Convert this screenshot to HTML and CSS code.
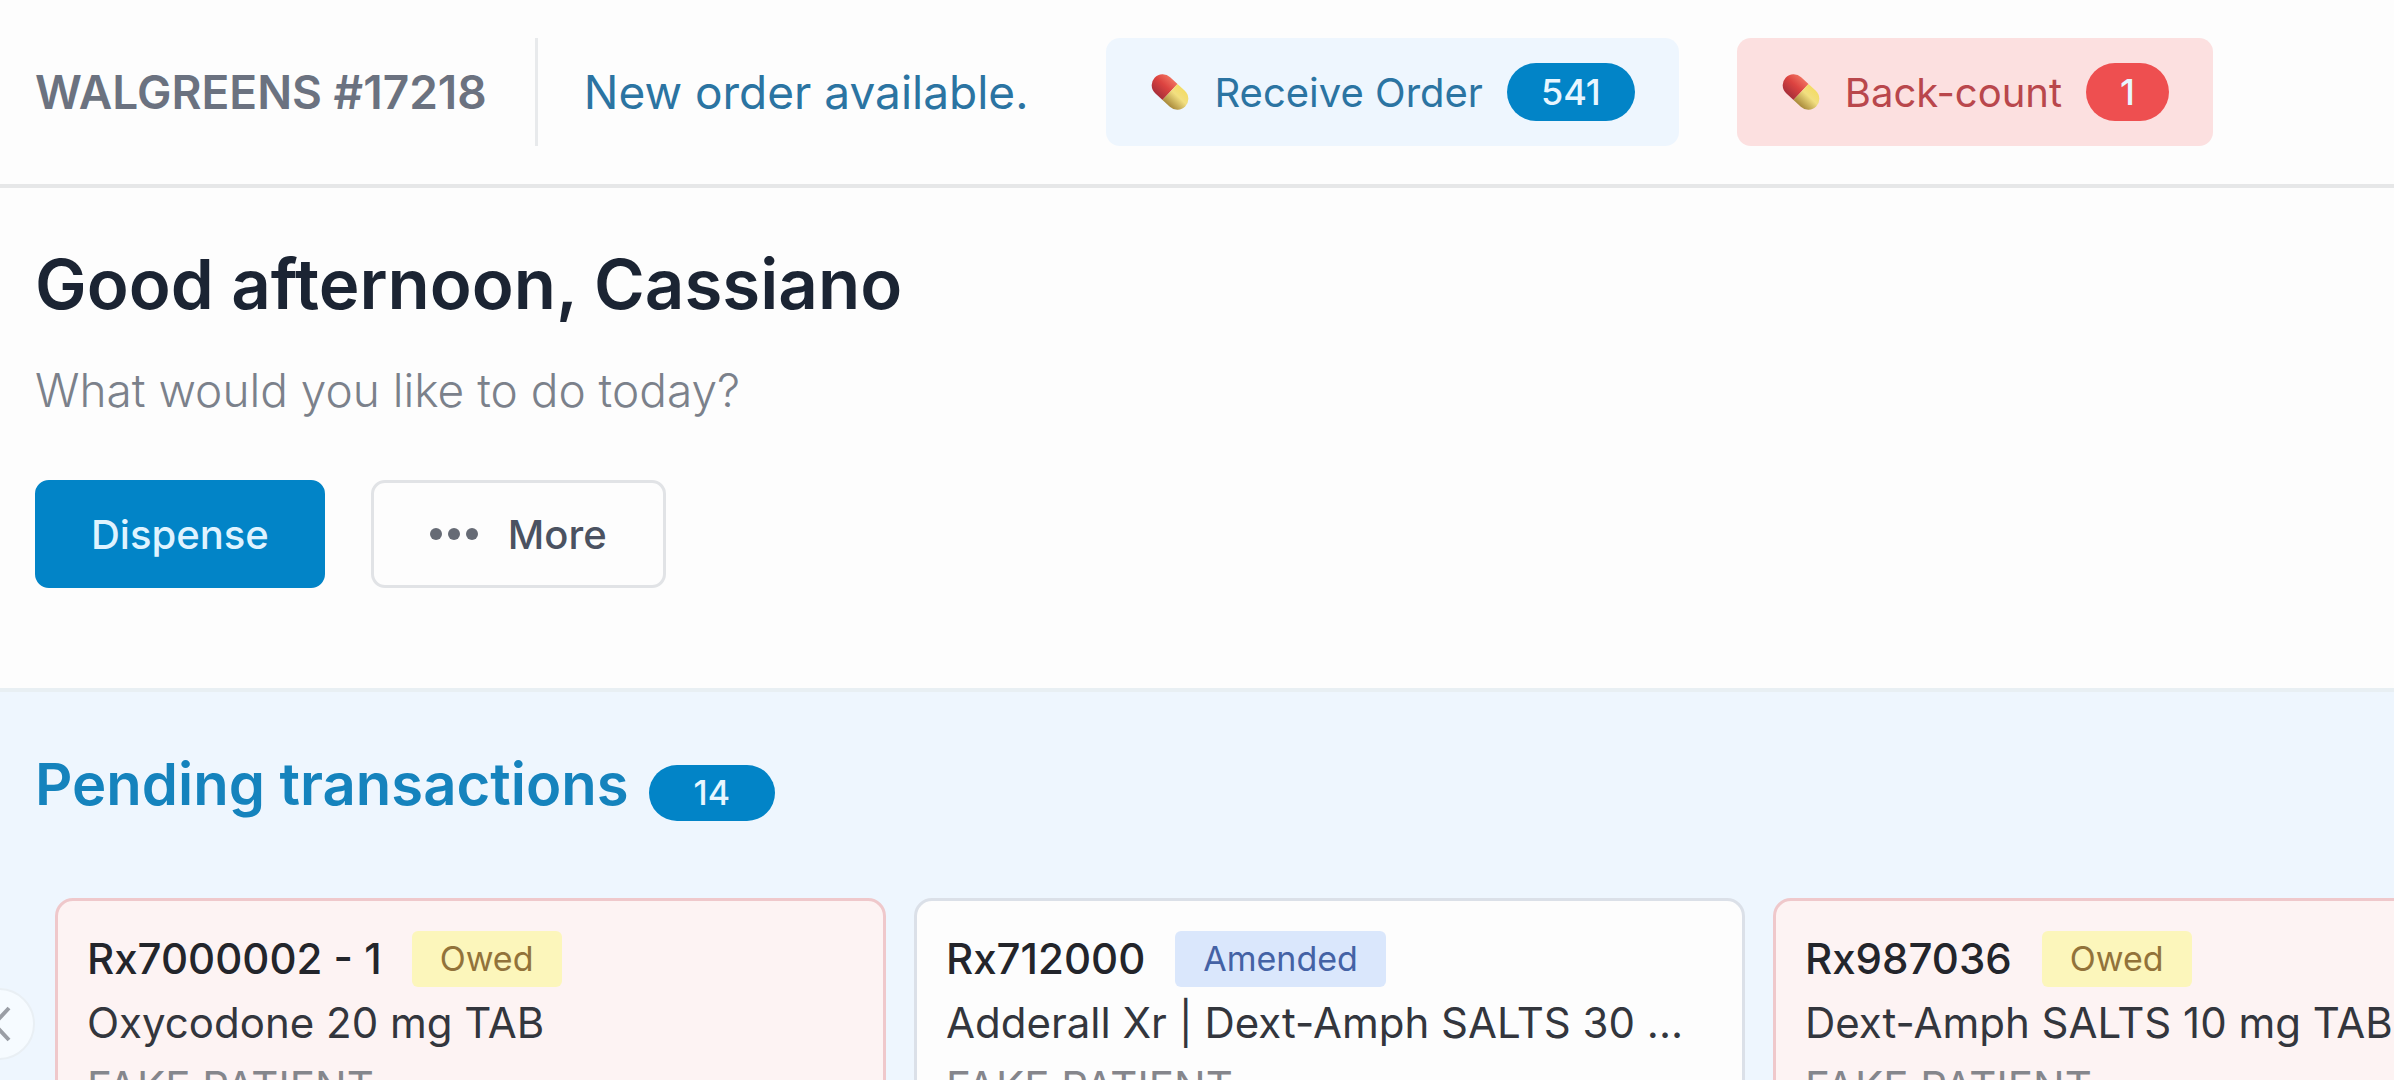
FILE: index.html
```
<!DOCTYPE html>
<html lang="en">
<head>
    <meta charset="UTF-8">
    <meta name="viewport" content="width=device-width, initial-scale=1.0">
    <title>Pharmacy Dashboard</title>
    <link rel="stylesheet" href="styles.css">
</head>
<body>
    <!-- Shared pill icon -->
    <svg class="sprite" aria-hidden="true">
        <defs>
            <linearGradient id="pill-red" x1="0" y1="0" x2="0" y2="1">
                <stop offset="0" stop-color="#f0705f"/>
                <stop offset="0.45" stop-color="#dc4340"/>
                <stop offset="1" stop-color="#a82f3a"/>
            </linearGradient>
            <linearGradient id="pill-yellow" x1="0" y1="0" x2="0" y2="1">
                <stop offset="0" stop-color="#f3dc66"/>
                <stop offset="0.4" stop-color="#f2df80"/>
                <stop offset="1" stop-color="#a8893a"/>
            </linearGradient>
            <symbol id="pill" viewBox="0 0 40 40">
                <g transform="rotate(43 20 20)">
                    <path d="M20 9H10a11 11 0 0 0 0 22h10z" fill="url(#pill-red)"/>
                    <path d="M20 9h10a11 11 0 0 1 0 22H20z" fill="url(#pill-yellow)"/>
                </g>
            </symbol>
        </defs>
    </svg>

    <div class="app">
        <header class="topbar">
            <div class="store">WALGREENS #17218</div>
            <a href="#" class="notice">New order available.</a>
            <button type="button" class="alert alert-blue">
                <svg class="pill-icon" aria-hidden="true"><use href="#pill"/></svg>
                Receive Order
                <span class="badge badge-blue">541</span>
            </button>
            <button type="button" class="alert alert-red">
                <svg class="pill-icon" aria-hidden="true"><use href="#pill"/></svg>
                Back-count
                <span class="badge badge-red">1</span>
            </button>
        </header>

        <main>
            <section class="welcome">
                <h1>Good afternoon, Cassiano</h1>
                <p>What would you like to do today?</p>
                <div class="actions">
                    <button type="button" class="btn btn-primary">Dispense</button>
                    <button type="button" class="btn btn-outline">
                        <svg class="dots" viewBox="0 0 48 12" aria-hidden="true">
                            <circle cx="6" cy="6" r="6"/>
                            <circle cx="24" cy="6" r="6"/>
                            <circle cx="42" cy="6" r="6"/>
                        </svg>
                        More
                    </button>
                </div>
            </section>

            <section class="pending">
                <div class="pending-title">
                    <h2>Pending transactions</h2>
                    <span class="badge badge-blue badge-wide">14</span>
                </div>
                <div class="carousel">
                    <button type="button" class="prev" aria-label="Previous">
                        <svg viewBox="0 0 24 40" aria-hidden="true"><path d="M22 4L7 20l15 16"/></svg>
                    </button>
                    <article class="card card-owed">
                        <div class="card-head">
                            <h3>Rx7000002 - 1</h3>
                            <span class="tag tag-yellow">Owed</span>
                        </div>
                        <p class="drug">Oxycodone 20 mg TAB</p>
                        <p class="patient">FAKE PATIENT</p>
                    </article>
                    <article class="card">
                        <div class="card-head">
                            <h3>Rx712000</h3>
                            <span class="tag tag-blue">Amended</span>
                        </div>
                        <p class="drug">Adderall Xr | Dext-Amph SALTS 30 ...</p>
                        <p class="patient">FAKE PATIENT</p>
                    </article>
                    <article class="card card-owed">
                        <div class="card-head">
                            <h3>Rx987036</h3>
                            <span class="tag tag-yellow">Owed</span>
                        </div>
                        <p class="drug">Dext-Amph SALTS 10 mg TAB</p>
                        <p class="patient">FAKE PATIENT</p>
                    </article>
                </div>
            </section>
        </main>
    </div>
</body>
</html>
```
FILE: styles.css
```
* {
    box-sizing: border-box;
}

body {
    margin: 0;
    font-family: Inter, "Liberation Sans", sans-serif;
    background-color: #fdfdfd;
    color: #1f2937;
}

h1, h2, h3, p {
    margin: 0;
}

button {
    font-family: inherit;
    cursor: pointer;
}

.sprite {
    position: absolute;
    width: 0;
    height: 0;
}

.app {
    height: 100vh;
    overflow: hidden;
}

/* Top bar */
.topbar {
    display: flex;
    align-items: center;
    padding: 38px 35px;
    border-bottom: 4px solid #e6e7e8;
    white-space: nowrap;
}

.store {
    font-size: 46px;
    font-weight: 600;
    line-height: 108px;
    color: #6b7280;
    padding-right: 48px;
    border-right: 3px solid #e8eaec;
}

.notice {
    margin: 0 78px 0 46px;
    font-size: 46px;
    color: #2b74a2;
    text-decoration: none;
}

.alert {
    display: flex;
    align-items: center;
    gap: 24px;
    height: 108px;
    padding: 0 44px;
    margin-right: 58px;
    border: none;
    border-radius: 14px;
    font-size: 40px;
}

.alert-blue {
    background-color: #eef6fe;
    color: #2b74a2;
}

.alert-red {
    background-color: #fce0e0;
    color: #b9474c;
}

.pill-icon {
    width: 40px;
    height: 40px;
}

.badge {
    padding: 0 34px;
    border-radius: 29px;
    font-size: 36px;
    font-weight: 500;
    line-height: 58px;
    color: #e8f6ff;
}

.badge-blue {
    background-color: #0284c7;
}

.badge-red {
    background-color: #ee4f50;
}

.badge-wide {
    padding: 0 45px;
    font-size: 34px;
    line-height: 56px;
}

/* Greeting and main actions */
.welcome {
    padding: 52px 35px 100px;
}

.welcome h1 {
    font-size: 69px;
    font-weight: 600;
    line-height: 88px;
    color: #1b2433;
}

.welcome p {
    margin-top: 32px;
    font-size: 46px;
    font-weight: 300;
    line-height: 60px;
    color: #7b818b;
}

.actions {
    display: flex;
    gap: 46px;
    margin-top: 60px;
}

.btn {
    display: flex;
    align-items: center;
    gap: 30px;
    height: 108px;
    padding: 0 56px;
    border: 3px solid #e1e3e6;
    border-radius: 14px;
    font-size: 40px;
    font-weight: 500;
}

.btn-primary {
    padding: 0 53px;
    background-color: #0284c7;
    border-color: #0284c7;
    color: #dff3ff;
}

.btn-outline {
    background-color: #fdfdfd;
    color: #4b5261;
}

.dots {
    width: 48px;
    height: 12px;
    fill: #666b75;
}

/* Pending transactions */
.pending {
    padding: 54px 0 0 55px;
    border-top: 4px solid #e8eff3;
    background-color: #eef6fe;
}

.pending-title {
    display: flex;
    align-items: baseline;
    gap: 20px;
    margin-left: -20px;
}

.pending h2 {
    font-size: 58px;
    font-weight: 600;
    line-height: 76px;
    color: #1583bd;
}

.carousel {
    position: relative;
    display: flex;
    gap: 28px;
    padding-top: 76px;
}

/* Previous button hangs over the left edge of the page */
.prev {
    position: absolute;
    left: -92px;
    top: 166px;
    display: flex;
    align-items: center;
    justify-content: center;
    width: 72px;
    height: 72px;
    padding: 0;
    border: 2px solid #e9eff4;
    border-radius: 50%;
    background-color: #f6fbff;
}

.prev svg {
    width: 24px;
    height: 40px;
    fill: none;
    stroke: #9a9ea5;
    stroke-width: 4;
}

.card {
    flex: 0 0 831px;
    padding: 30px 29px;
    border: 3px solid #dbe0e8;
    border-radius: 18px;
    background-color: #fdfdfd;
    color: #33363d;
    white-space: nowrap;
}

.card-owed {
    background-color: #fdf3f3;
    border-color: #efc8cb;
}

.card-head {
    display: flex;
    align-items: center;
    gap: 30px;
}

.card h3 {
    font-size: 42px;
    font-weight: 500;
    line-height: 56px;
    color: #23252b;
}

.tag {
    padding: 0 28px;
    border-radius: 6px;
    font-size: 34px;
    line-height: 56px;
}

.tag-yellow {
    background-color: #fcf6bb;
    color: #92733a;
}

.tag-blue {
    background-color: #dae7fc;
    color: #4462a5;
}

.drug {
    margin-top: 6px;
    font-size: 42px;
    line-height: 60px;
}

.patient {
    margin-top: 4px;
    font-size: 42px;
    line-height: 60px;
    color: #85868c;
}
```
